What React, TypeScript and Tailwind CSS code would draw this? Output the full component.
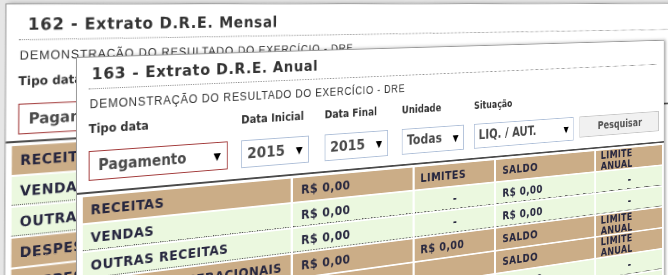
type Cell = { t: string; center?: boolean };
type Row = { head: boolean; cells: Cell[] };

const L = (t: string): Cell => ({ t });
const C = (t: string): Cell => ({ t, center: true });

const TABLE: Row[] = [
  { head: true, cells: [L("RECEITAS"), L("R$ 0,00"), L("LIMITES"), L("SALDO"), L("LIMITE ANUAL")] },
  { head: false, cells: [L("VENDAS"), L("R$ 0,00"), C("-"), L("R$ 0,00"), C("-")] },
  { head: false, cells: [L("OUTRAS RECEITAS"), L("R$ 0,00"), C("-"), L("R$ 0,00"), C("-")] },
  { head: true, cells: [L("DESPESAS OPERACIONAIS"), L("R$ 0,00"), L("R$ 0,00"), L("SALDO"), L("LIMITE ANUAL")] },
  { head: true, cells: [L("DESPESAS FIXAS"), L("R$ 0,00"), L(""), L("SALDO"), L("LIMITE ANUAL")] },
  { head: false, cells: [L("ALUGUEL"), L("R$ 0,00"), C("-"), L("R$ 0,00"), C("-")] },
  { head: false, cells: [L("SALÁRIOS"), L("R$ 0,00"), C("-"), L("R$ 0,00"), C("-")] },
];

const VERDANA = "font-['DejaVu_Sans',Verdana,sans-serif]";

function Arrow() {
  return <span className="text-[11px] leading-none text-black">▼</span>;
}

function Select({ value, red, width, size }: { value: string; red?: boolean; width: string; size: string }) {
  return (
    <div
      className={`flex h-[30px] items-center justify-between bg-white pr-[7px] font-bold text-[#4a4a4a] ${VERDANA} ${size} ${width} ${
        red ? "border border-[#a23a3a] pl-[9px]" : "border border-[#aebfd8] pl-[6px]"
      }`}
    >
      <span>{value}</span>
      <Arrow />
    </div>
  );
}

function Field({ label, children, className }: { label: string; children: React.ReactNode; className: string }) {
  return (
    <div className={`flex flex-col ${className}`}>
      <div className={`h-[15px] text-[12px] leading-[15px] font-bold text-[#333] ${VERDANA}`}>{label}</div>
      <div className="mt-[14px]">{children}</div>
    </div>
  );
}

function DreTable({ rowH }: { rowH: string }) {
  return (
    <div
      className={`ml-[6px] mt-[3px] grid grid-cols-[235px_158px_116px_159px_117px] gap-x-[3px] gap-y-[2px] text-[14px] font-bold tracking-[0.5px] text-[#27273f] ${VERDANA}`}
    >
      {TABLE.map((row, ri) =>
        row.cells.map((c, ci) => (
          <div
            key={`${ri}-${ci}`}
            className={`flex items-center ${rowH} ${c.center ? "justify-center" : ci === 1 || ci === 3 ? "pl-[10px]" : "pl-[8px]"} ${
              row.head ? "bg-[#cbad87]" : "border-b border-dotted border-[#555] bg-[#ebf8df]"
            } ${ci === 4 && row.head ? "leading-[14px]" : "leading-[16px]"}`}
          >
            {c.t}
          </div>
        ))
      )}
    </div>
  );
}

function Window({
  title,
  pos,
  titlePad,
  lineGap,
  rowH,
}: {
  title: string;
  pos: string;
  titlePad: string;
  lineGap: string;
  rowH: string;
}) {
  return (
    <div className={`absolute border border-[#9a9a9a] bg-white shadow-[3px_0_4px_rgba(0,0,0,0.3)] ${pos}`}>
      <div
        className={`mx-[12px] border-b border-dotted border-[#8c8c8c] pb-[5px] text-[16.5px] leading-[19px] font-bold tracking-[0.7px] text-[#333] ${VERDANA} ${titlePad}`}
      >
        {title}
      </div>
      <div className="mt-[8px] pl-[13px] font-['Liberation_Sans',Arial,sans-serif] text-[12.5px] leading-[14px] tracking-[0.9px] text-[#333]">
        DEMONSTRAÇÃO DO RESULTADO DO EXERCÍCIO - DRE
      </div>
      <div className="mt-[11px] flex items-end pl-[12px]">
        <Field label="Tipo data" className="">
          <Select value="Pagamento" red width="w-[153px]" size="text-[15px]" />
        </Field>
        <Field label="Data Inicial" className="ml-[16px]">
          <Select value="2015" width="w-[83px]" size="text-[16.5px]" />
        </Field>
        <Field label="Data Final" className="ml-[20px]">
          <Select value="2015" width="w-[84px]" size="text-[16.5px]" />
        </Field>
        <Field label="Unidade" className="ml-[19px]">
          <Select value="Todas" width="w-[89px]" size="text-[15.5px]" />
        </Field>
        <Field label="Situação" className="ml-[15px]">
          <Select value="LIQ. / AUT." width="w-[157px]" size="text-[15.5px]" />
        </Field>
        <button
          className={`mb-[3px] ml-[10px] h-[27px] w-[139px] border border-[#c6c6c6] bg-[#f1f1f1] text-[14px] font-bold text-[#555] ${VERDANA}`}
        >
          Pesquisar
        </button>
      </div>
      <div className={`border-t-2 border-[#4a4a4a] ${lineGap}`} />
      <DreTable rowH={rowH} />
    </div>
  );
}

export default function App() {
  return (
    <div className="relative h-[275px] w-[668px] overflow-hidden bg-[#e6e6e6] perspective-[489px] perspective-origin-[76px_-10px]">
      <div className="absolute left-0 top-0 h-[420px] w-[1000px] origin-[76px_-10px] rotate-y-[12deg]">
        <Window
          title="162 - Extrato D.R.E. Mensal"
          pos="left-[6px] top-[3px] w-[1000px] h-[420px] origin-top-left rotate-[0.3deg]"
          titlePad="pl-[9px] pt-[10px]"
          lineGap="mt-[6px]"
          rowH="h-[28px]"
        />
        <Window
          title="163 - Extrato D.R.E. Anual"
          pos="left-[76px] top-[57px] w-[808px] h-[380px]"
          titlePad="pl-[3px] pt-[7px]"
          lineGap="mt-[11px]"
          rowH="h-[26px]"
        />
      </div>
    </div>
  );
}
